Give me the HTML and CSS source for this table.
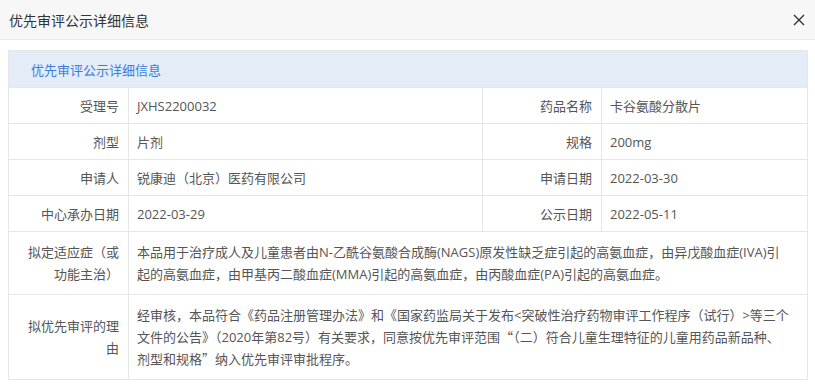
FILE: index.html
```html
<!DOCTYPE html>
<html lang="zh">
<head>
<meta charset="utf-8">
<link rel="stylesheet" href="styles.css">
</head>
<body>
<div class="dialog">
  <div class="dialog-header">
    <span class="dialog-title">优先审评公示详细信息</span>
    <svg class="close" width="12" height="12" viewBox="0 0 12 12"><path d="M1 1 L11 11 M11 1 L1 11" stroke="#333" stroke-width="1.4" fill="none"/></svg>
  </div>
  <div class="dialog-body">
    <table class="info">
      <colgroup>
        <col class="c-label"><col class="c-value"><col class="c-label2"><col>
      </colgroup>
      <tr class="head"><td colspan="4">优先审评公示详细信息</td></tr>
      <tr class="single"><th>受理号</th><td>JXHS2200032</td><th>药品名称</th><td>卡谷氨酸分散片</td></tr>
      <tr class="single"><th>剂型</th><td>片剂</td><th>规格</th><td>200mg</td></tr>
      <tr class="single"><th>申请人</th><td>锐康迪（北京）医药有限公司</td><th>申请日期</th><td>2022-03-30</td></tr>
      <tr class="single"><th>中心承办日期</th><td>2022-03-29</td><th>公示日期</th><td>2022-05-11</td></tr>
      <tr class="multi"><th>拟定适应症（或功能主治）</th><td colspan="3">本品用于治疗成人及儿童患者由N-乙酰谷氨酸合成酶(NAGS)原发性缺乏症引起的高氨血症，由异戊酸血症(IVA)引起的高氨血症，由甲基丙二酸血症(MMA)引起的高氨血症，由丙酸血症(PA)引起的高氨血症。</td></tr>
      <tr class="multi"><th>拟优先审评的理由</th><td colspan="3">经审核，本品符合《药品注册管理办法》和《国家药监局关于发布&lt;突破性治疗药物审评工作程序（试行）&gt;等三个文件的公告》（2020年第82号）有关要求，同意按优先审评范围<span class="q">“</span>（二）符合儿童生理特征的儿童用药品新品种、剂型和规格<span class="q">”</span>纳入优先审评审批程序。</td></tr>
    </table>
  </div>
</div>
</body>
</html>
```

FILE: styles.css
```css
html, body {
  margin: 0;
  padding: 0;
  background: #fff;
}
body {
  font-family: "Open Sans", "Noto Sans CJK SC", sans-serif;
  color: #555;
}
.dialog {
  width: 815px;
}
.dialog-header {
  height: 40px;
  box-sizing: border-box;
  background: #f7f7f7;
  border-bottom: 1px solid #e8e8e8;
  display: flex;
  align-items: center;
  justify-content: space-between;
  padding: 0 10px 0 9px;
}
.dialog-title {
  font-size: 14px;
  color: #333;
}
.close {
  display: block;
  margin-top: 1px;
}
.dialog-body {
  padding: 10px 7px 8px 8px;
}
.info {
  width: 100%;
  border-collapse: collapse;
  table-layout: fixed;
  font-size: 13px;
}
.c-label { width: 120px; }
.c-value { width: 354px; }
.c-label2 { width: 119px; }
.info td, .info th {
  border: 1px solid #e6e6e6;
  padding: 0 18px 0 8px;
  font-weight: normal;
  color: #555;
}
.info th {
  text-align: right;
  padding-right: 9px;
}
.info td {
  text-align: left;
}
.q {
  font-family: "Noto Sans CJK SC", sans-serif;
}
.info tr.head td {
  background: #e4ecf8;
  color: #3b7ddd;
  height: 36px;
  padding-left: 22px;
  font-size: 13px;
}
.info tr.single th, .info tr.single td {
  height: 35px;
  line-height: 18px;
  padding-top: 0;
  padding-bottom: 0;
}
.info tr.multi th, .info tr.multi td {
  line-height: 22px;
  padding-top: 9px;
  padding-bottom: 9px;
}
```
